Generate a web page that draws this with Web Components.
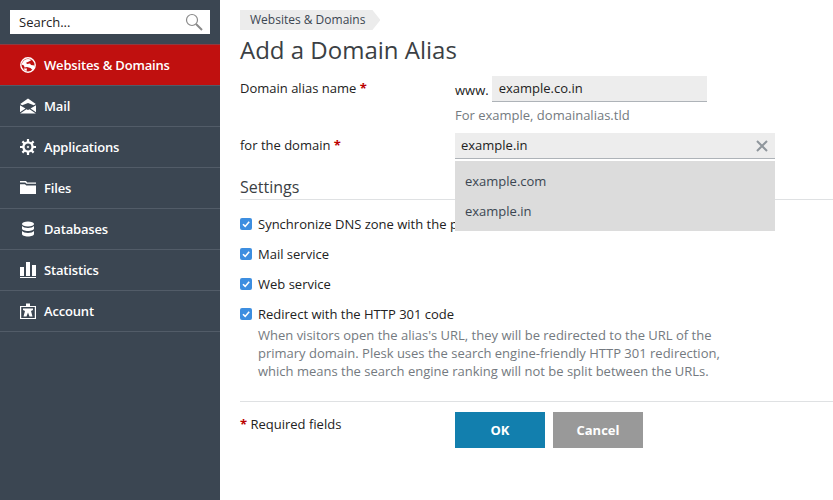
<!DOCTYPE html>
<html><head><meta charset="utf-8">
<style>
html,body{margin:0;padding:0;height:100%;background:#fff;overflow:hidden}
body{font:13px/18px "Open Sans",sans-serif;color:#222}
plesk-app{height:500px}
</style></head><body>
<plesk-app>
  <plesk-sidebar slot="side">
    <plesk-search></plesk-search>
    <plesk-nav label="Websites &amp; Domains" icon="globe" active></plesk-nav>
    <plesk-nav label="Mail" icon="mail"></plesk-nav>
    <plesk-nav label="Applications" icon="gear"></plesk-nav>
    <plesk-nav label="Files" icon="folder"></plesk-nav>
    <plesk-nav label="Databases" icon="db"></plesk-nav>
    <plesk-nav label="Statistics" icon="stats"></plesk-nav>
    <plesk-nav label="Account" icon="account"></plesk-nav>
  </plesk-sidebar>
  <plesk-form>
    <plesk-crumb>Websites &amp; Domains</plesk-crumb>
    <plesk-title>Add a Domain Alias</plesk-title>
    <plesk-row label="Domain alias name" req h="57">
      <plesk-alias value="example.co.in" hint="For example, domainalias.tld"></plesk-alias>
    </plesk-row>
    <plesk-row label="for the domain" req h="42">
      <plesk-select value="example.in"><span>example.com</span><span>example.in</span></plesk-select>
    </plesk-row>
    <plesk-section>Settings</plesk-section>
    <plesk-check>Synchronize DNS zone with the primary domain</plesk-check>
    <plesk-check>Mail service</plesk-check>
    <plesk-check>Web service</plesk-check>
    <plesk-check hint="When visitors open the alias's URL, they will be redirected to the URL of the primary domain. Plesk uses the search engine-friendly HTTP 301 redirection, which means the search engine ranking will not be split between the URLs.">Redirect with the HTTP 301 code</plesk-check>
    <plesk-footer></plesk-footer>
  </plesk-form>
</plesk-app>
<script>
const ICONS={
globe:`<circle cx="8" cy="8" r="7.200" fill="none" stroke="#fff" stroke-width="1.400"/><path fill="#fff" d="M1.500 7.500C2.500 4 5 2 8 2c1.300 0 2.500.4 3.500 1L9 4.500l-3 1.200L7 7l3-.5 1 1.500 3.500.5c0 2-.5 3.500-2 4.500l-2-2L7 10l-2.500.5-.5-2z"/><path fill="#fff" d="M3.500 11.500 7 11.500 6.500 14 5 13.500z"/>`,
mail:`<path fill="#fff" d="M8 .5 15.800 6 13.800 7.300 8 5 2.200 7.300.2 6z"/><path fill="#fff" d="M0 7.200 5.500 10.600 0 14.300zM16 7.200v7.100L10.500 10.600zM6.400 11.200 8 12.100l1.600-.9L15.800 15.500H.2z"/>`,
gear:`<g fill="none" stroke="#fff"><circle cx="8" cy="8" r="4.600" stroke-width="2.400"/><circle cx="8" cy="8" r=".8" fill="#fff" stroke-width=".6"/><path stroke-width="2.200" d="M8 0v3M8 13v3M0 8h3M13 8h3M2.400 2.400l2.100 2.100M11.500 11.500l2.100 2.100M2.400 13.600l2.100-2.100M11.500 4.500l2.100-2.100"/></g>`,
folder:`<path fill="#fff" d="M0 1h6l1.200 1.500H16v1.300H6.500L5.200 2.400H0zM0 4.200h5l1.300 1.300H16V14H0z"/>`,
db:`<g fill="#fff"><ellipse cx="8" cy="3" rx="6" ry="2.500"/><path d="M2 5c1 1.300 3.500 2 6 2s5-.7 6-2v2.500c0 1.400-2.700 2.500-6 2.500S2 8.900 2 7.500z"/><path d="M2 10c1 1.300 3.500 2 6 2s5-.7 6-2v3c0 1.400-2.700 2.500-6 2.500S2 14.400 2 13z"/></g>`,
stats:`<path fill="#fff" d="M0 5h4v9H0zM6 0h4v14H6zM12 3h4v11h-4zM0 15h16v1H0z"/>`,
account:`<path fill="none" stroke="#fff" stroke-width="1.200" d="M.6 3.500h14.800v12H.6z"/><path fill="#fff" d="M6 .5h4v3H6zM3 5.500h10v1.500l-2 1 1.500 5.500H9.500L8 9.500 6.500 13.500H3.500L5 8 3 7z"/>`};
const sh=(el,html)=>{el.attachShadow({mode:'open'}).innerHTML=html;};
const def=(n,f)=>customElements.define(n,class extends HTMLElement{connectedCallback(){if(!this.shadowRoot)f(this);}});

def('plesk-app',e=>sh(e,`<style>:host{display:flex;width:833px}::slotted(plesk-sidebar){flex:none}
.m{flex:1;min-width:0}</style><slot name="side"></slot><div class="m"><slot></slot></div>`));

def('plesk-sidebar',e=>sh(e,`<style>:host{display:flex;flex-direction:column;width:220px;height:500px;background:#3b4652;box-sizing:border-box;padding-top:10px}</style><slot></slot>`));

def('plesk-search',e=>sh(e,`<style>:host{display:flex;align-items:center;justify-content:space-between;height:24px;margin:0 10px 10px;width:200px;background:#fff;box-sizing:border-box;padding:0 7px 0 9px;font-size:13px;color:#222}
svg{display:block}</style><span>Search...</span><svg width="18" height="18" viewBox="0 0 18 18"><circle cx="7" cy="7" r="5.500" fill="none" stroke="#8a8a8a" stroke-width="1.200"/><path d="M11 11l6 6" stroke="#8a8a8a" stroke-width="2"/></svg>`));

def('plesk-nav',e=>{const a=e.hasAttribute('active');sh(e,`<style>:host{display:flex;align-items:center;height:40px;border-top:1px solid ${a?'#8f3a40':'#525c68'};border-bottom:${a?'1px solid #8f3a40':'0'};margin-bottom:${a?'-1px':'0'};background:${a?'#c0100f':'transparent'};color:#fff;font-weight:600;letter-spacing:-.17px;font-size:13px;padding-left:20px;position:relative}
:host(:last-child){border-bottom:1px solid #525c68}
svg{width:16px;height:16px;margin-right:8px;flex:none;display:block}</style><svg viewBox="0 0 16 16">${ICONS[e.getAttribute('icon')]}</svg><span>${e.getAttribute('label').replace('&','&amp;')}</span>`)});

def('plesk-form',e=>sh(e,`<style>:host{display:block;padding:10px 0 0 20px;box-sizing:border-box;height:500px;overflow:hidden}</style><slot></slot>`));

def('plesk-crumb',e=>sh(e,`<style>:host{display:block;width:max-content;height:20px;font-size:12px;line-height:20px;color:#3b4652}
div{background:#ececec;padding:0 15px 0 10px;clip-path:polygon(0 0,calc(100% - 8px) 0,100% 50%,calc(100% - 8px) 100%,0 100%)}</style><div><slot></slot></div>`));

def('plesk-title',e=>sh(e,`<style>:host{display:block;font-size:24px;line-height:32px;margin:4px 0 10px;color:#3b3f44}</style><slot></slot>`));

def('plesk-row',e=>sh(e,`<style>:host{display:flex;height:${e.getAttribute('h')}px}
label{width:215px;flex:none;padding-top:3px}
b{color:#b00;font-weight:700}</style><label>${e.getAttribute('label')} <b>*</b></label><slot></slot>`));

def('plesk-alias',e=>sh(e,`<style>:host{display:block;width:320px}
.r{display:flex;align-items:center;height:26px}
.i{width:215px;height:26px;box-sizing:border-box;background:#ededed;border-bottom:1px solid #aeb3b8;padding:2px 7px 0;line-height:20px;margin-left:3px}
.h{color:#747a80;margin-top:4px;line-height:18px}
span.w{padding-top:2px}</style><div class="r"><span class="w">www.</span><div class="i">${e.getAttribute('value')}</div></div><div class="h">${e.getAttribute('hint')}</div>`));

def('plesk-select',e=>sh(e,`<style>:host{display:block;position:relative;width:320px;height:26px}
.i{display:flex;justify-content:space-between;align-items:center;box-sizing:border-box;background:#ededed;border-bottom:1px solid #aeb3b8;padding:0 7px 2px 6px;height:26px}
svg{display:block;margin-top:2px}
.d{position:absolute;left:0;top:28px;width:100%;height:70px;background:#dcdcdc;box-sizing:border-box;padding:10px 10px;z-index:2;color:#3b4652;box-shadow:0 3px 0 #fff}
::slotted(span){display:block;height:30px;line-height:20px}</style>
<div class="i"><span>${e.getAttribute('value')}</span><svg width="12" height="12" viewBox="0 0 12 12"><path d="M1 1l10 10M11 1L1 11" stroke="#8f969c" stroke-width="2"/></svg></div><div class="d"><slot></slot></div>`));

def('plesk-section',e=>sh(e,`<style>:host{display:block;font-size:16px;line-height:24px;color:#3b3f44;border-bottom:1px solid #dfe1e3;height:24px;margin-bottom:15px}</style><slot></slot>`));

def('plesk-check',e=>{const h=e.getAttribute('hint');sh(e,`<style>:host{display:flex;margin-bottom:12px;position:relative;line-height:18px}
svg{width:12px;height:12px;margin:3px 6px 0 0;flex:none;display:block}
.h{color:#747a80;line-height:18px;width:470px;margin-top:3px}
.x{white-space:nowrap}</style><svg viewBox="0 0 12 12"><rect width="12" height="12" rx="2" fill="#3d8ee0"/><path d="M3 6.200l2.200 2.200L9.200 3.800" fill="none" stroke="#fff" stroke-width="1.600"/></svg><div class="x"><slot></slot>${h?`<div class="h" style="white-space:normal">${h}</div>`:''}</div>`)});

def('plesk-footer',e=>sh(e,`<style>:host{display:flex;border-top:1px solid #dfe1e3;margin-top:21px;padding-top:10px;width:593px}
.l{width:215px;flex:none;padding-top:3px}
b{color:#b00}
.b{display:flex;gap:8px}</style><div class="l"><b>*</b> Required fields</div><div class="b"><plesk-button color="#127fae">OK</plesk-button><plesk-button color="#999">Cancel</plesk-button></div>`));

def('plesk-button',e=>sh(e,`<style>:host{display:flex;align-items:center;justify-content:center;width:90px;height:36px;background:${e.getAttribute('color')};color:#fff;font-weight:700;font-size:13px}</style><slot></slot>`));
</script>
</body></html>
